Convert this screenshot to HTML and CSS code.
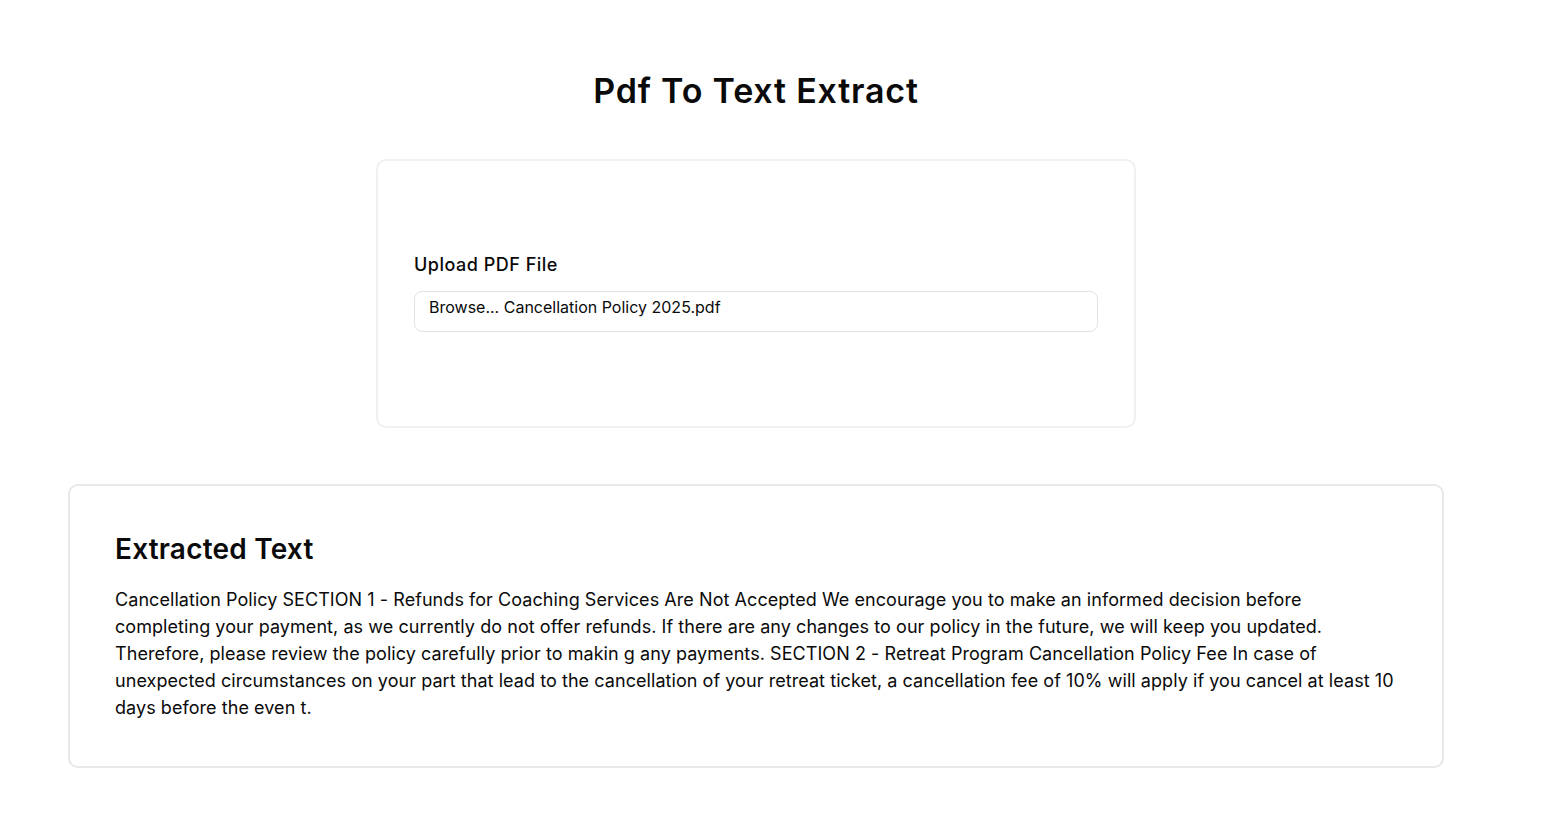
FILE: index.html
```html
<!DOCTYPE html>
<html lang="en">
<head>
<meta charset="utf-8">
<title>Pdf To Text Extract</title>
<link rel="stylesheet" href="styles.css">
</head>
<body>
<main class="page">
  <h1 class="title">Pdf To Text Extract</h1>
  <section class="upload-card">
    <label class="upload-label">Upload PDF File</label>
    <div class="file-input"><span class="browse">Browse...</span> <span class="file-name">Cancellation Policy 2025.pdf</span></div>
  </section>
  <section class="result-card">
    <h2 class="result-title">Extracted Text</h2>
    <p class="result-text">Cancellation Policy SECTION 1 - Refunds for Coaching Services Are Not Accepted We encourage you to make an informed decision before completing your payment, as we currently do not offer refunds. If there are any changes to our policy in the future, we will keep you updated. Therefore, please review the policy carefully prior to makin g any payments. SECTION 2 - Retreat Program Cancellation Policy Fee In case of unexpected circumstances on your part that lead to the cancellation of your retreat ticket, a cancellation fee of 10% will apply if you cancel at least 10 days before the even t.</p>
  </section>
</main>
</body>
</html>
```

FILE: styles.css
```css
* { box-sizing: border-box; }
html, body { margin: 0; padding: 0; background: #ffffff; }
body {
  font-family: Inter, "Noto Sans", "Liberation Sans", sans-serif;
  color: #0a0a0a;
}
.page {
  width: 1376px;
  margin-left: 68px;
  padding-top: 71px;
  display: flex;
  flex-direction: column;
  align-items: center;
}
.title {
  margin: 0;
  font-size: 34px;
  line-height: 40px;
  font-weight: 600;
  letter-spacing: 0.8px;
}
.upload-card {
  margin-top: 48px;
  width: 760px;
  border: 2px solid #f0f0f0;
  border-radius: 10px;
  padding: 90px 36px 94px;
  display: flex;
  flex-direction: column;
  gap: 13px;
}
.upload-label {
  font-size: 18px;
  line-height: 27px;
  font-weight: 500;
  letter-spacing: 0.5px;
}
.file-input {
  height: 41px;
  border: 1px solid #e3e3e3;
  border-radius: 8px;
  padding: 5px 14px;
  font-size: 16px;
  line-height: 20px;
  color: #0a0a0a;
}
.browse { font-weight: 400; }
.result-card {
  margin-top: 56px;
  width: 1376px;
  border: 2px solid #e8e8e8;
  border-radius: 10px;
  padding: 47px 48px 45px 45px;
}
.result-title {
  margin: 0 0 21px;
  font-size: 28px;
  line-height: 32px;
  font-weight: 600;
  letter-spacing: 0.2px;
}
.result-text {
  margin: 0;
  font-size: 18px;
  line-height: 27px;
  font-weight: 400;
  letter-spacing: 0.06px;
}
```
